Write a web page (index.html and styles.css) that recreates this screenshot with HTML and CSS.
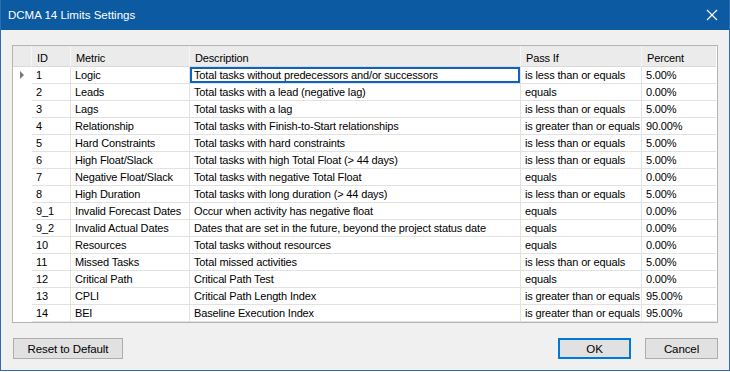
FILE: index.html
```html
<!DOCTYPE html>
<html lang="en">
<head>
  <meta charset="UTF-8">
  <title>DCMA 14 Limits Settings</title>
  <link rel="stylesheet" href="styles.css">
</head>
<body>

  <div class="window">
    <div class="titlebar">
      <span class="title">DCMA 14 Limits Settings</span>
      <svg class="close" width="12" height="12" viewBox="0 0 12 12">
        <path d="M1 1 L11 11 M11 1 L1 11" stroke="#fff" stroke-width="1.2" fill="none"/>
      </svg>
    </div>

    <div class="content">
      <div class="grid">
        <table>
          <colgroup>
            <col class="c-sel">
            <col class="c-id">
            <col class="c-metric">
            <col class="c-desc">
            <col class="c-pass">
            <col class="c-pct">
          </colgroup>
          <thead>
            <tr>
              <th class="sel"></th>
              <th>ID</th>
              <th>Metric</th>
              <th>Description</th>
              <th>Pass If</th>
              <th>Percent</th>
            </tr>
          </thead>
          <tbody>
            <tr>
              <td class="sel"><span class="arrow"></span></td>
              <td>1</td><td>Logic</td>
              <td class="current">Total tasks without predecessors and/or successors</td>
              <td>is less than or equals</td><td>5.00%</td>
            </tr>
            <tr>
              <td class="sel"></td>
              <td>2</td><td>Leads</td><td>Total tasks with a lead (negative lag)</td>
              <td>equals</td><td>0.00%</td>
            </tr>
            <tr>
              <td class="sel"></td>
              <td>3</td><td>Lags</td><td>Total tasks with a lag</td>
              <td>is less than or equals</td><td>5.00%</td>
            </tr>
            <tr>
              <td class="sel"></td>
              <td>4</td><td>Relationship</td><td>Total tasks with Finish-to-Start relationships</td>
              <td>is greater than or equals</td><td>90.00%</td>
            </tr>
            <tr>
              <td class="sel"></td>
              <td>5</td><td>Hard Constraints</td><td>Total tasks with hard constraints</td>
              <td>is less than or equals</td><td>5.00%</td>
            </tr>
            <tr>
              <td class="sel"></td>
              <td>6</td><td>High Float/Slack</td><td>Total tasks with high Total Float (&gt; 44 days)</td>
              <td>is less than or equals</td><td>5.00%</td>
            </tr>
            <tr>
              <td class="sel"></td>
              <td>7</td><td>Negative Float/Slack</td><td>Total tasks with negative Total Float</td>
              <td>equals</td><td>0.00%</td>
            </tr>
            <tr>
              <td class="sel"></td>
              <td>8</td><td>High Duration</td><td>Total tasks with long duration (&gt; 44 days)</td>
              <td>is less than or equals</td><td>5.00%</td>
            </tr>
            <tr>
              <td class="sel"></td>
              <td>9_1</td><td>Invalid Forecast Dates</td><td>Occur when activity has negative float</td>
              <td>equals</td><td>0.00%</td>
            </tr>
            <tr>
              <td class="sel"></td>
              <td>9_2</td><td>Invalid Actual Dates</td><td>Dates that are set in the future, beyond the project status date</td>
              <td>equals</td><td>0.00%</td>
            </tr>
            <tr>
              <td class="sel"></td>
              <td>10</td><td>Resources</td><td>Total tasks without resources</td>
              <td>equals</td><td>0.00%</td>
            </tr>
            <tr>
              <td class="sel"></td>
              <td>11</td><td>Missed Tasks</td><td>Total missed activities</td>
              <td>is less than or equals</td><td>5.00%</td>
            </tr>
            <tr>
              <td class="sel"></td>
              <td>12</td><td>Critical Path</td><td>Critical Path Test</td>
              <td>equals</td><td>0.00%</td>
            </tr>
            <tr>
              <td class="sel"></td>
              <td>13</td><td>CPLI</td><td>Critical Path Length Index</td>
              <td>is greater than or equals</td><td>95.00%</td>
            </tr>
            <tr>
              <td class="sel"></td>
              <td>14</td><td>BEI</td><td>Baseline Execution Index</td>
              <td>is greater than or equals</td><td>95.00%</td>
            </tr>
          </tbody>
        </table>
      </div>

      <div class="buttons">
        <button type="button" class="btn btn-reset">Reset to Default</button>
        <div class="btn-right">
          <button type="button" class="btn btn-ok">OK</button>
          <button type="button" class="btn">Cancel</button>
        </div>
      </div>
    </div>
  </div>

</body>
</html>
```

FILE: styles.css
```css
* {
  box-sizing: border-box;
}

body {
  margin: 0;
  font-family: "Liberation Sans", Arial, sans-serif;
  font-size: 11px;
  letter-spacing: -0.15px;
  color: #000;
  background-color: #fff;
}

.window {
  width: 730px;
  height: 371px;
  border: 1px solid #2c6cb0;
  border-top: none;
  background-color: #f0f0f0;
  display: flex;
  flex-direction: column;
}

.titlebar {
  height: 30px;
  background-color: #0b5aa2;
  color: #fff;
  display: flex;
  align-items: center;
  justify-content: space-between;
  padding: 0 11px 0 7px;
}

.title {
  font-size: 11.5px;
  letter-spacing: 0;
}

.content {
  flex: 1;
  padding: 15px 11px 0 11px;
}

.grid {
  height: 278px;
  border: 1px solid #b4b4b4;
  background-color: #fff;
}

.grid table {
  table-layout: fixed;
  border-collapse: separate;
  border-spacing: 0;
  width: 703px;
}

.c-sel { width: 19px; }
.c-id { width: 39px; }
.c-metric { width: 119px; }
.c-desc { width: 331px; }
.c-pass { width: 121px; }
.c-pct { width: 74px; }

.grid th {
  height: 21px;
  padding: 3px 0 0 5px;
  font-weight: normal;
  text-align: left;
  background-color: #ebebeb;
  border-right: 1px solid #f6f6f6;
  border-bottom: 1px solid #dadada;
  white-space: nowrap;
}

.grid th:last-child {
  border-right: none;
}

.grid td {
  height: 17px;
  padding: 1px 0 0 4px;
  line-height: 15px;
  border-right: 1px solid #e2e2e2;
  border-bottom: 1px solid #e2e2e2;
  white-space: nowrap;
  overflow: hidden;
}

.grid td:last-child {
  border-right: none;
}

.grid td.sel {
  border: none;
  padding: 0;
  position: relative;
}

.arrow {
  position: absolute;
  left: 7px;
  top: 4px;
  width: 0;
  height: 0;
  border-top: 4px solid transparent;
  border-bottom: 4px solid transparent;
  border-left: 4px solid #7a7a7a;
}

.grid td.current {
  box-shadow: inset 0 0 0 2px #0b64c0;
}

.buttons {
  display: flex;
  justify-content: space-between;
  margin-top: 15px;
  padding-left: 1px;
}

.btn-right {
  display: flex;
  gap: 14px;
}

.btn {
  width: 73px;
  height: 21px;
  padding: 0;
  font-family: "Liberation Sans", Arial, sans-serif;
  font-size: 11.5px;
  letter-spacing: -0.1px;
  color: #000;
  background-color: #e1e1e1;
  border: 1px solid #adadad;
}

.btn-reset {
  width: 110px;
}

.btn-ok {
  border: 2px solid #0078d7;
}
```
